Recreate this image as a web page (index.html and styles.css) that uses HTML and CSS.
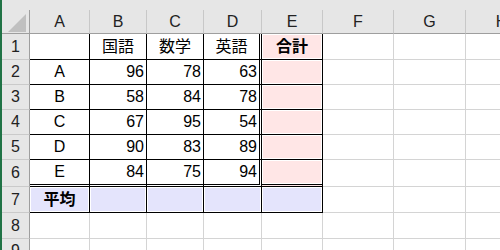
FILE: index.html
```html
<!DOCTYPE html>
<html lang="ja">
<head>
    <meta charset="UTF-8">
    <meta name="viewport" content="width=device-width, initial-scale=1.0">
    <title>成績表</title>
    <link rel="stylesheet" href="styles.css">
</head>
<body>
    <div class="sheet">
        <div class="head-strip"></div>

        <table class="grid">
            <colgroup>
                <col class="w-rh">
                <col class="w-a">
                <col class="w-b">
                <col class="w-c">
                <col class="w-d">
                <col class="w-e">
                <col class="w-f">
                <col class="w-g">
                <col class="w-h">
            </colgroup>
            <thead>
                <tr>
                    <th class="corner">
                        <svg width="27" height="23" viewBox="0 0 27 23">
                            <polygon points="6,22 24,22 24,4" fill="#c0c0c0"/>
                        </svg>
                    </th>
                    <th>A</th>
                    <th>B</th>
                    <th>C</th>
                    <th>D</th>
                    <th>E</th>
                    <th>F</th>
                    <th>G</th>
                    <th>H</th>
                </tr>
            </thead>
            <tbody>
                <tr class="row-1">
                    <th class="rh">1</th>
                    <td class="line"></td>
                    <td class="line mid">国語</td>
                    <td class="line mid">数学</td>
                    <td class="line mid dbl-right">英語</td>
                    <td class="line mid sum strong">合計</td>
                    <td></td><td></td><td></td>
                </tr>
                <tr>
                    <th class="rh">2</th>
                    <td class="line mid">A</td>
                    <td class="line num">96</td>
                    <td class="line num">78</td>
                    <td class="line num dbl-right">63</td>
                    <td class="line sum"></td>
                    <td></td><td></td><td></td>
                </tr>
                <tr>
                    <th class="rh">3</th>
                    <td class="line mid">B</td>
                    <td class="line num">58</td>
                    <td class="line num">84</td>
                    <td class="line num dbl-right">78</td>
                    <td class="line sum"></td>
                    <td></td><td></td><td></td>
                </tr>
                <tr>
                    <th class="rh">4</th>
                    <td class="line mid">C</td>
                    <td class="line num">67</td>
                    <td class="line num">95</td>
                    <td class="line num dbl-right">54</td>
                    <td class="line sum"></td>
                    <td></td><td></td><td></td>
                </tr>
                <tr>
                    <th class="rh">5</th>
                    <td class="line mid">D</td>
                    <td class="line num">90</td>
                    <td class="line num">83</td>
                    <td class="line num dbl-right">89</td>
                    <td class="line sum"></td>
                    <td></td><td></td><td></td>
                </tr>
                <tr class="row-6">
                    <th class="rh">6</th>
                    <td class="line mid dbl-bottom">E</td>
                    <td class="line num dbl-bottom">84</td>
                    <td class="line num dbl-bottom">75</td>
                    <td class="line num dbl-right dbl-bottom">94</td>
                    <td class="line sum dbl-bottom"></td>
                    <td></td><td></td><td></td>
                </tr>
                <tr class="row-7">
                    <th class="rh">7</th>
                    <td class="line mid avg strong">平均</td>
                    <td class="line avg"></td>
                    <td class="line avg"></td>
                    <td class="line avg"></td>
                    <td class="line avg"></td>
                    <td></td><td></td><td></td>
                </tr>
                <tr class="row-8">
                    <th class="rh">8</th>
                    <td></td><td></td><td></td><td></td><td></td><td></td><td></td><td></td>
                </tr>
                <tr>
                    <th class="rh">9</th>
                    <td></td><td></td><td></td><td></td><td></td><td></td><td></td><td></td>
                </tr>
            </tbody>
        </table>
    </div>
</body>
</html>
```

FILE: styles.css
```css
body {
    margin: 0;
    background-color: #fff;
    font-family: 'Liberation Sans', 'Noto Sans CJK JP', sans-serif;
    font-size: 16px;
    color: #000;
}

.sheet {
    height: 250px;
    overflow: hidden;
    border-left: 2px solid #217346;
}

.head-strip {
    height: 10px;
    width: 600px;
    background-color: #e6e6e6;
}

.grid {
    border-collapse: separate;
    border-spacing: 0;
    table-layout: fixed;
    width: 536px;
}

/* column widths include the right border */
.w-rh { width: 28px; }
.w-a { width: 60px; }
.w-b { width: 57px; }
.w-c { width: 57px; }
.w-d { width: 58px; }
.w-e { width: 61px; }
.w-f { width: 71px; }
.w-g { width: 72px; }
.w-h { width: 72px; }

.grid th,
.grid td {
    box-sizing: border-box;
    padding: 0;
    height: 25px;
    line-height: 1;
    white-space: nowrap;
    overflow: hidden;
    font-weight: normal;
    border-right: 1px solid #d4d4d4;
    border-bottom: 1px solid #d4d4d4;
}

/* column headers */
.grid thead th {
    height: 24px;
    background-color: #e6e6e6;
    color: #222;
    text-align: center;
    border-right-color: #c8c8c8;
    border-bottom-color: #9e9e9e;
}

.grid thead th.corner {
    border-right-color: #9e9e9e;
}

.corner svg {
    display: block;
}

/* row headers */
.grid th.rh {
    background-color: #e6e6e6;
    color: #222;
    text-align: center;
    border-right-color: #9e9e9e;
    border-bottom-color: #cacaca;
}

.row-1 th,
.row-1 td {
    height: 26px;
}

.row-6 th,
.row-6 td {
    height: 27px;
}

.row-7 th,
.row-7 td,
.row-8 th,
.row-8 td {
    height: 26px;
}

/* bordered data range */
.grid td.line {
    border-right-color: #000;
    border-bottom-color: #000;
}

.grid td.dbl-right {
    border-right: 3px double #000;
}

.grid td.dbl-bottom {
    border-bottom: 3px double #000;
}

.mid {
    text-align: center;
}

.num {
    text-align: right;
    padding-right: 2px !important;
}

.strong {
    font-weight: bold !important;
}

.sum {
    background-color: #ffe6e6;
    box-shadow: inset 0 0 0 1px #fff;
}

.avg {
    background-color: #e4e4fc;
    box-shadow: inset 0 0 0 1px #fff;
}
```
